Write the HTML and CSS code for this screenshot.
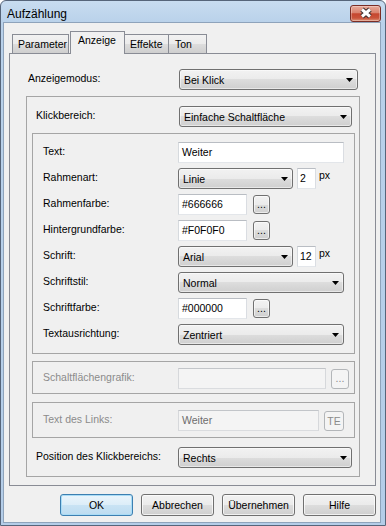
FILE: index.html
```html
<!DOCTYPE html>
<html>
<head>
<meta charset="utf-8">
<title>Aufzählung</title>
<link rel="stylesheet" href="styles.css">
</head>
<body>
<div class="window">
	<div class="titlebar">
		<span class="title">Aufzählung</span>
		<span class="close">
			<svg width="29" height="15" viewBox="0 0 29 15">
				<path d="M11 3.5 L19 10.5 M19 3.5 L11 10.5" stroke="#3a2c2c" stroke-width="5" fill="none"/>
				<path d="M11 3.5 L19 10.5 M19 3.5 L11 10.5" stroke="#ffffff" stroke-width="3" fill="none"/>
			</svg>
		</span>
	</div>
	<div class="client">
		<div class="tabs">
			<div class="tab tab_param">Parameter</div>
			<div class="tab tab_current">Anzeige</div>
			<div class="tab tab_effects">Effekte</div>
			<div class="tab tab_sound">Ton</div>
		</div>
		<div class="panel">
			<div class="row row_top">
				<span class="lbl">Anzeigemodus:</span>
				<div class="combo combo_top"><span>Bei Klick</span><svg class="arrow" width="7" height="4" viewBox="0 0 7 4"><polygon points="0,0 7,0 3.5,4" fill="#000"/></svg></div>
			</div>
			<div class="group group_outer">
				<div class="row row_outer">
					<span class="lbl lbl_outer">Klickbereich:</span>
					<div class="combo combo_klick"><span>Einfache Schaltfläche</span><svg class="arrow" width="7" height="4" viewBox="0 0 7 4"><polygon points="0,0 7,0 3.5,4" fill="#000"/></svg></div>
				</div>
				<div class="group group_inner">
					<div class="row row_inner">
						<span class="lbl lbl_inner">Text:</span>
						<div class="field field_wide">Weiter</div>
					</div>
					<div class="row row_inner">
						<span class="lbl lbl_inner">Rahmenart:</span>
						<div class="combo combo_short"><span>Linie</span><svg class="arrow" width="7" height="4" viewBox="0 0 7 4"><polygon points="0,0 7,0 3.5,4" fill="#000"/></svg></div>
						<div class="field field_num">2</div>
						<span class="unit">px</span>
					</div>
					<div class="row row_inner">
						<span class="lbl lbl_inner">Rahmenfarbe:</span>
						<div class="field field_color">#666666</div>
						<div class="dots">...</div>
					</div>
					<div class="row row_inner">
						<span class="lbl lbl_inner">Hintergrundfarbe:</span>
						<div class="field field_color">#F0F0F0</div>
						<div class="dots">...</div>
					</div>
					<div class="row row_inner">
						<span class="lbl lbl_inner">Schrift:</span>
						<div class="combo combo_short"><span>Arial</span><svg class="arrow" width="7" height="4" viewBox="0 0 7 4"><polygon points="0,0 7,0 3.5,4" fill="#000"/></svg></div>
						<div class="field field_num">12</div>
						<span class="unit">px</span>
					</div>
					<div class="row row_inner">
						<span class="lbl lbl_inner">Schriftstil:</span>
						<div class="combo combo_wide"><span>Normal</span><svg class="arrow" width="7" height="4" viewBox="0 0 7 4"><polygon points="0,0 7,0 3.5,4" fill="#000"/></svg></div>
					</div>
					<div class="row row_inner">
						<span class="lbl lbl_inner">Schriftfarbe:</span>
						<div class="field field_color">#000000</div>
						<div class="dots">...</div>
					</div>
					<div class="row row_inner">
						<span class="lbl lbl_inner">Textausrichtung:</span>
						<div class="combo combo_wide"><span>Zentriert</span><svg class="arrow" width="7" height="4" viewBox="0 0 7 4"><polygon points="0,0 7,0 3.5,4" fill="#000"/></svg></div>
					</div>
				</div>
				<div class="group group_image disabled">
					<div class="row row_inner">
						<span class="lbl lbl_inner">Schaltflächengrafik:</span>
						<div class="field field_image"></div>
						<div class="dots dots_image">...</div>
					</div>
				</div>
				<div class="group group_link disabled">
					<div class="row row_inner">
						<span class="lbl lbl_inner">Text des Links:</span>
						<div class="field field_link">Weiter</div>
						<div class="dots dots_te">TE</div>
					</div>
				</div>
				<div class="row row_outer row_pos">
					<span class="lbl lbl_pos">Position des Klickbereichs:</span>
					<div class="combo combo_pos"><span>Rechts</span><svg class="arrow" width="7" height="4" viewBox="0 0 7 4"><polygon points="0,0 7,0 3.5,4" fill="#000"/></svg></div>
				</div>
			</div>
		</div>
		<div class="buttons">
			<div class="btn btn_default">OK</div>
			<div class="btn">Abbrechen</div>
			<div class="btn">Übernehmen</div>
			<div class="btn">Hilfe</div>
		</div>
	</div>
</div>
</body>
</html>
```

FILE: styles.css
```css
body {
	margin: 0;
	background: #ffffff;
	font-family: "Liberation Sans", Arial, sans-serif;
	font-size: 10.5px;
	color: #000000;
}

.window {
	box-sizing: border-box;
	width: 386px;
	height: 526px;
	border: 1px solid #56657a;
	border-radius: 6px 6px 0 0;
	background: linear-gradient(#c8dcf0, #b9d1ea 22px, #b4cde8);
	padding: 0 4px 2px 2px;
	display: flex;
	flex-direction: column;
}

.titlebar {
	height: 21px;
	flex: none;
	display: flex;
	justify-content: space-between;
	align-items: flex-start;
}
.title {
	padding: 5px 0 0 4px;
	font-size: 12px;
	line-height: 16px;
}
.close {
	box-sizing: border-box;
	width: 31px;
	height: 17px;
	margin-top: 4px;
	border: 1px solid #7a2d25;
	border-radius: 3px;
	background: linear-gradient(#e9aa99 0%, #d9836f 45%, #c6462f 52%, #c9533a 80%, #de9579 100%);
	box-shadow: inset 0 0 0 1px rgba(255, 255, 255, 0.3);
}
.close svg {
	display: block;
}

.client {
	flex: 1;
	min-height: 0;
	background: #f0f0f0;
	border: 1px solid #8ea3bb;
	display: flex;
	flex-direction: column;
}

/* tabs */
.tabs {
	box-sizing: border-box;
	height: 31px;
	flex: none;
	margin: 0 4px -1px 5px;
	padding-left: 3px;
	display: flex;
	align-items: flex-end;
}
.tab {
	box-sizing: border-box;
	height: 19px;
	margin-bottom: 1px;
	padding: 3px 0 0 5px;
	line-height: 13px;
	border: 1px solid #898c95;
	border-bottom: none;
	background: linear-gradient(#f2f2f2, #ebebeb 50%, #dddddd 50%, #cfcfcf);
}
.tab_param {
	width: 57px;
}
.tab_current {
	position: relative;
	z-index: 1;
	width: 55px;
	height: 23px;
	margin: 0 0 0 1px;
	padding: 2px 0 0 7px;
	background: #f0f0f0;
}
.tab_effects {
	width: 45px;
	margin-left: -1px;
}
.tab_sound {
	width: 39px;
	margin-left: -1px;
	padding-left: 6px;
}

.panel {
	flex: none;
	margin: 0 4px 0 5px;
	padding: 15px 15px 8px 16px;
	border: 1px solid #898c95;
}

/* rows and labels */
.row {
	height: 21px;
	display: flex;
	align-items: flex-start;
	flex: none;
}
.lbl {
	flex: none;
	padding-top: 3px;
	line-height: 13px;
	white-space: nowrap;
}
.row_top {
	padding-left: 2px;
}
.row_top .lbl {
	width: 151px;
}
.row_outer {
	padding-left: 9px;
}
.lbl_outer {
	width: 143px;
}
.lbl_pos {
	width: 142px;
}
.row_pos {
	margin-top: 9px;
}
.row_inner {
	padding-left: 10px;
}
.lbl_inner {
	width: 135px;
}

/* group boxes */
.group {
	border: 1px solid #a5a5a5;
	display: flex;
	flex-direction: column;
}
.group_outer {
	margin-top: 6px;
	padding: 9px 0 8px;
}
.group_inner {
	margin: 6px 4px 0 5px;
	padding: 8px 0;
	gap: 5px;
}
.group_image {
	margin: 7px 4px 0 5px;
	padding: 6px 0 4px;
}
.group_link {
	margin: 8px 4px 0 5px;
	padding: 7px 0 6px;
}

/* controls */
.combo {
	box-sizing: border-box;
	height: 21px;
	padding: 0 4px;
	border: 1px solid #707070;
	border-radius: 3px;
	background: linear-gradient(#f2f2f2, #ebebeb 50%, #dddddd 50%, #cfcfcf);
	box-shadow: inset 0 0 0 1px rgba(255, 255, 255, 0.5);
	display: flex;
	align-items: center;
	justify-content: space-between;
	line-height: 13px;
	white-space: nowrap;
}
.combo span {
	padding-top: 1px;
}
.combo_top {
	width: 179px;
}
.combo_klick {
	width: 173px;
}
.combo_pos {
	width: 174px;
}
.combo_short {
	width: 115px;
}
.combo_wide {
	width: 166px;
}

.field {
	box-sizing: border-box;
	height: 21px;
	padding: 0 3px;
	background: #ffffff;
	border: 1px solid;
	border-color: #b9bdc3 #dadde2 #e3e6ea #d6dade;
	display: flex;
	align-items: center;
	line-height: 13px;
	white-space: nowrap;
}
.field_wide {
	width: 166px;
}
.field_num {
	width: 19px;
	margin-left: 4px;
	padding: 0 2px;
}
.field_color {
	width: 69px;
}
.field_image {
	width: 148px;
}
.field_link {
	width: 141px;
}
.unit {
	margin-left: 3px;
	padding-top: 1px;
	line-height: 13px;
}

.dots {
	box-sizing: border-box;
	width: 17px;
	height: 19px;
	margin: 1px 0 0 6px;
	border: 1px solid #707070;
	border-radius: 3px;
	background: linear-gradient(#f2f2f2, #ebebeb 50%, #dddddd 50%, #cfcfcf);
	box-shadow: inset 0 0 0 1px rgba(255, 255, 255, 0.6);
	text-align: center;
	line-height: 13px;
	padding-top: 2px;
}
.dots_image {
	width: 18px;
	height: 20px;
	margin-left: 5px;
}
.dots_te {
	width: 20px;
	height: 20px;
	margin-left: 5px;
	padding-top: 3px;
}

/* disabled parts */
.disabled .lbl {
	color: #8b8b8b;
}
.disabled .field {
	background: #f4f4f4;
	border-color: #c2c5c9 #d6d8db #dadcdf #d6d8db;
	color: #6d6d6d;
}
.disabled .dots {
	border-color: #b3b6b9;
	background: #f4f4f4;
	box-shadow: none;
	color: #8b8b8b;
}

/* dialog buttons */
.buttons {
	flex: none;
	margin-top: 8px;
	padding-right: 4px;
	display: flex;
	justify-content: flex-end;
	gap: 8px;
}
.btn {
	box-sizing: border-box;
	width: 73px;
	height: 22px;
	border: 1px solid #707070;
	border-radius: 3px;
	background: linear-gradient(#f2f2f2, #ebebeb 50%, #dddddd 50%, #cfcfcf);
	box-shadow: inset 0 0 0 1px rgba(255, 255, 255, 0.7);
	text-align: center;
	line-height: 13px;
	padding-top: 4px;
}
.btn_default {
	border-color: #3c7fb1;
	background: linear-gradient(#eaf5fc, #dcedf8 50%, #c9e3f4 50%, #bcdcf1);
	box-shadow: inset 0 0 0 1px #a9dcf6;
}
```
